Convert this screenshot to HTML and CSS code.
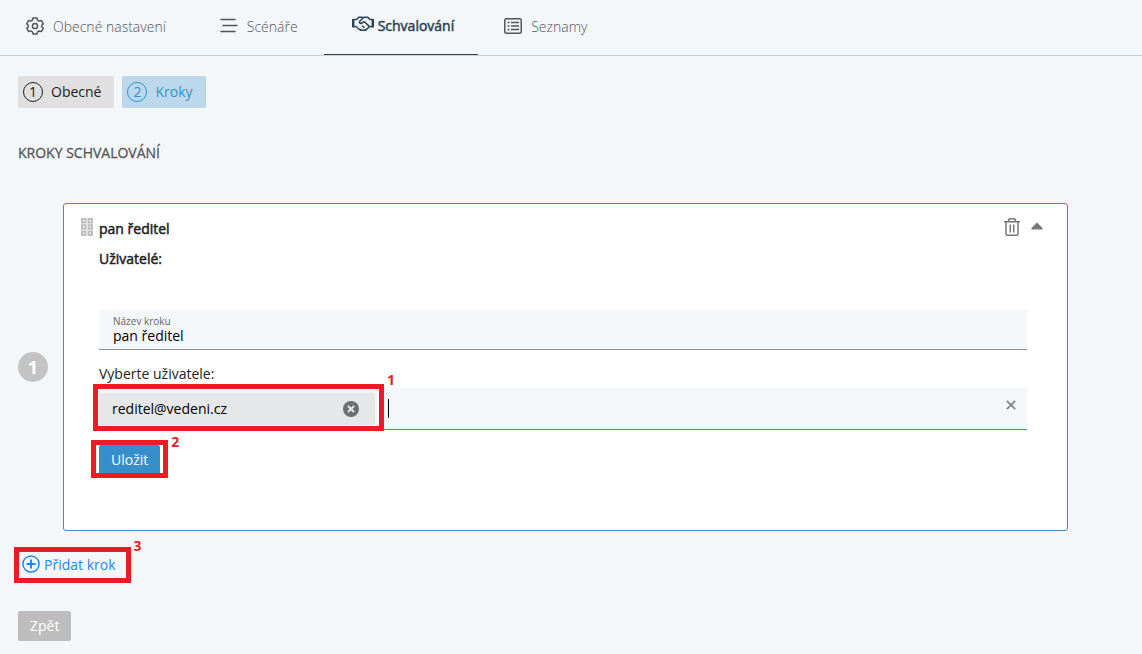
FILE: index.html
```html
<!DOCTYPE html>
<html lang="cs">
<head>
<meta charset="utf-8">
<meta name="viewport" content="width=device-width, initial-scale=1">
<title>Schvalování</title>
<link rel="stylesheet" href="styles.css">
</head>
<body>
<nav class="tabs">
  <a class="tab" href="#obecne">
    <svg class="tab-icon" width="18" height="18" viewBox="0 0 18 18" fill="none" stroke="currentColor" stroke-width="1.5" stroke-linejoin="round"><path d="M7 1h4l.6 2.2 1.6.9 2.2-.6 1.9 3.3L15.700 8.200v1.600l1.600 1.500-1.900 3.300-2.200-.6-1.600.9L11 17H7l-.6-2.200-1.600-.9-2.200.6-1.900-3.300 1.600-1.500V8.200L.7 6.800l1.900-3.300 2.200.6 1.600-.9z"/><circle cx="9" cy="9" r="2.600"/></svg>
    <span>Obecné nastavení</span>
  </a>
  <a class="tab" href="#scenare">
    <svg class="tab-icon" width="18" height="18" viewBox="0 0 18 18" fill="none" stroke="currentColor" stroke-width="1.500" stroke-linecap="round"><path d="M1 2.500h14M3 8.500h14M1 14.500h14"/></svg>
    <span>Scénáře</span>
  </a>
  <a class="tab tab-active" href="#schvalovani" aria-current="page">
    <svg class="tab-icon" width="22" height="18" viewBox="0 0 22 18" fill="none" stroke="currentColor" stroke-width="1.600" stroke-linejoin="round" stroke-linecap="round"><path d="M1.200 3v8.500M20.800 3v8.500" stroke-width="2.400" stroke-linecap="butt"/><path d="M2 3.500h2.500L7 1.200h3l1 .8 1.500-.8h3L18 3.500h2M2 10.500h2l3.500 3c1.500 1 5.500 1 7 0l3-3H20M11 2 7.500 5.500c-.6 1.600 1.500 2.600 3 1.200L12 5.500l4.500 4.200M10.500 10l1.500 1.500"/></svg>
    <span>Schvalování</span>
  </a>
  <a class="tab" href="#seznamy">
    <svg class="tab-icon" width="18" height="18" viewBox="0 0 18 18" fill="none" stroke="currentColor" stroke-width="1.500"><rect x=".75" y="1.750" width="16.500" height="14.500" rx="1.500"/><path d="M3.500 5.500h2M3.500 9h2M3.500 12.500h2M7 5.500h8M7 9h8M7 12.500h8"/></svg>
    <span>Seznamy</span>
  </a>
</nav>

<main class="page">
  <div class="stages">
    <button class="stage" type="button"><span class="stage-number">1</span>Obecné</button>
    <button class="stage stage-current" type="button"><span class="stage-number">2</span>Kroky</button>
  </div>

  <h1 class="heading">KROKY SCHVALOVÁNÍ</h1>

  <div class="step">
    <span class="step-number">1</span>
    <section class="card">
      <header class="card-header">
        <svg class="grip" width="12" height="18" viewBox="0 0 12 18" fill="none" stroke="#bdbdbd" stroke-width="2"><path d="M1 1h3.500v3.500H1zM7.500 1H11v3.500H7.500zM1 7.250h3.500v3.500H1zM7.500 7.250H11v3.500H7.500zM1 13.500h3.500V17H1zM7.500 13.500H11V17H7.500z"/></svg>
        <h2 class="card-title">pan ředitel</h2>
        <button class="icon-button" type="button" aria-label="Smazat krok">
          <svg width="16" height="18" viewBox="0 0 16 18" fill="none" stroke="#777" stroke-width="1.500"><path d="M0 3.700h16M4.500 3.500C4.500 1.500 5 .8 6 .8h4c1 0 1.500.7 1.500 2.700M2 4v11.500c0 1.200.5 1.800 1.500 1.800h9c1 0 1.500-.6 1.500-1.800V4M6.300 6.500v8M9.700 6.500v8"/></svg>
        </button>
        <button class="icon-button" type="button" aria-label="Sbalit krok">
          <svg width="12" height="18" viewBox="0 0 12 18"><path d="M6 4.500 11.500 10v1.500H.5V10z" fill="#777"/></svg>
        </button>
      </header>
      <p class="card-users">Uživatelé:</p>

      <div class="name-field">
        <label class="name-label" for="step-name">Název kroku</label>
        <input class="name-input" id="step-name" type="text" value="pan ředitel">
      </div>

      <label class="users-label" for="step-users">Vyberte uživatele:</label>
      <div class="users-field">
        <div class="chip">
          <span>reditel@vedeni.cz</span>
          <button class="icon-button" type="button" aria-label="Odebrat uživatele">
            <svg width="16" height="16" viewBox="0 0 16 16"><circle cx="8" cy="8" r="8" fill="#6d6e6f"/><path d="m5 5 6 6M11 5l-6 6" stroke="#e6e7e8" stroke-width="2"/></svg>
          </button>
          <span class="mark mark-user"><b class="mark-number">1</b></span>
        </div>
        <span class="caret"></span>
        <input class="users-input" id="step-users" type="text">
        <button class="icon-button clear" type="button" aria-label="Vymazat výběr">
          <svg width="10" height="10" viewBox="0 0 10 10"><path d="m.8.8 8.400 8.400M9.200.8.8 9.200" stroke="#858585" stroke-width="1.800"/></svg>
        </button>
      </div>

      <div class="marked">
        <button class="save" type="button">Uložit</button>
        <span class="mark mark-save"><b class="mark-number">2</b></span>
      </div>
    </section>
  </div>

  <div class="marked add-row">
    <button class="add" type="button">
      <svg width="18" height="18" viewBox="0 0 18 18" fill="none" stroke="currentColor"><circle cx="9" cy="9" r="8.100" stroke-width="1.500"/><path d="M9 4.500v9M4.500 9h9" stroke-width="2"/></svg>
      <span>Přidat krok</span>
    </button>
    <span class="mark mark-add"><b class="mark-number">3</b></span>
  </div>

  <button class="back" type="button">Zpět</button>
</main>
</body>
</html>
```
FILE: styles.css
```css
* {
  box-sizing: border-box;
}

body {
  margin: 0;
  background: #f3f7fa;
  color: #222;
  font: 14px/20px "Open Sans", "Noto Sans", sans-serif;
}

button,
input {
  margin: 0;
  padding: 0;
  border: 0;
  background: none;
  color: inherit;
  font: inherit;
}

button {
  cursor: pointer;
}

svg {
  display: block;
  flex: none;
}

.tabs {
  display: flex;
  height: 56px;
  border-bottom: 1px solid #c9d1d6;
}

.tab {
  display: flex;
  align-items: center;
  gap: 9px;
  padding: 0 26px 2px;
  color: #555;
  font-weight: 300;
  text-decoration: none;
}

.tab:first-child {
  padding-right: 28px;
}

.tab-icon {
  margin-bottom: 2px;
}

.tab-active {
  gap: 4px;
  padding: 0 24px 2px 28px;
  border-bottom: 1px solid #2b4455;
  color: #2b4455;
}

.tab-active,
.card-title,
.card-users {
  font-weight: 400;
  -webkit-text-stroke: 0.5px currentColor;
}

.page {
  padding: 20px 74px 12px 18px;
}

.stages {
  display: flex;
  gap: 8px;
}

.stage {
  display: flex;
  align-items: center;
  gap: 8px;
  height: 32px;
  padding: 0 13px 0 5px;
  border-radius: 2px;
  background: #e0e0e0;
}

.stage-current {
  background: #bbd8ec;
  color: #368fcb;
}

.stage-number {
  width: 20px;
  height: 20px;
  border: 1px solid currentColor;
  border-radius: 50%;
  line-height: 18px;
}

.heading {
  margin: 35px 0 40px;
  color: #555;
  font-size: 14px;
  font-weight: 400;
  -webkit-text-stroke: 0.3px currentColor;
}

.step {
  display: flex;
  align-items: center;
  gap: 15px;
}

.step-number {
  flex: none;
  width: 30px;
  border-radius: 50%;
  background: #c3c3c3;
  color: #fff;
  font-size: 18px;
  font-weight: 700;
  line-height: 30px;
  text-align: center;
}

.card {
  flex: 1;
  padding: 10px 40px 55px 35px;
  border: 1px solid #368fcb;
  border-radius: 3px;
  background: #fff;
}

.card-header {
  display: flex;
  align-items: center;
  gap: 11px;
  height: 30px;
  margin: 0 -16px 0 -18px;
}

.grip {
  margin: 0 -5px 4px 0;
}

.card-title {
  flex: 1;
  margin: 0;
  font-size: 14px;
}

.icon-button {
  display: flex;
  align-items: center;
}

.card-header .icon-button {
  margin-bottom: 4px;
}

.card-users {
  margin: 5px 0 41px;
}

.name-field {
  display: flex;
  flex-direction: column;
  height: 40px;
  padding: 4px 14px 0;
  border-bottom: 1px solid #8c8f92;
  border-radius: 2px 2px 0 0;
  background: #f3f7fa;
}

.name-label {
  color: #666;
  font-size: 10px;
  line-height: 14px;
}

.name-input {
  height: 16px;
  color: #000;
  outline: 0;
}

.users-label {
  display: block;
  margin: 14px 0 4px;
}

.users-field {
  display: flex;
  align-items: center;
  height: 42px;
  margin-bottom: 15px;
  border-bottom: 1px solid #368fcb;
  background: #f3f7fa;
}

.chip {
  position: relative;
  display: flex;
  flex: none;
  align-items: center;
  justify-content: space-between;
  width: 276px;
  height: 32px;
  padding: 0 16px 0 13px;
  border-radius: 2px;
  background: #e6e7e8;
  color: #000;
}

.caret {
  width: 1px;
  height: 19px;
  margin-left: 13px;
  background: #000;
}

.users-input {
  flex: 1;
  min-width: 0;
  outline: 0;
}

.clear {
  margin: 0 11px 8px;
}

.marked {
  position: relative;
  width: max-content;
}

.save,
.back {
  display: block;
  height: 30px;
  padding: 0 12px;
  border-radius: 2px;
  background: #368fcb;
  color: #fff;
}

.add-row {
  margin: 24px 0 36px 4px;
}

.add {
  display: flex;
  align-items: center;
  gap: 4px;
  color: #1e88ff;
}

.add svg {
  margin-bottom: 2px;
}

.back {
  background: #bdbdbd;
}

.mark {
  position: absolute;
  border: 5px solid #ed1c24;
  pointer-events: none;
}

.mark-number {
  position: absolute;
  bottom: 100%;
  left: 100%;
  margin-left: 8px;
  color: #ed1c24;
  font-size: 14px;
  line-height: 16px;
}

.mark-user {
  inset: -9px -9px -6px -6px;
}

.mark-user .mark-number {
  margin-bottom: 1px;
}

.mark-save {
  inset: -5px -8px -3px;
}

.mark-save .mark-number {
  margin-bottom: -5px;
}

.mark-add {
  inset: -8px -15px -8px -8px;
}

.mark-add .mark-number {
  margin-bottom: -2px;
}
```
